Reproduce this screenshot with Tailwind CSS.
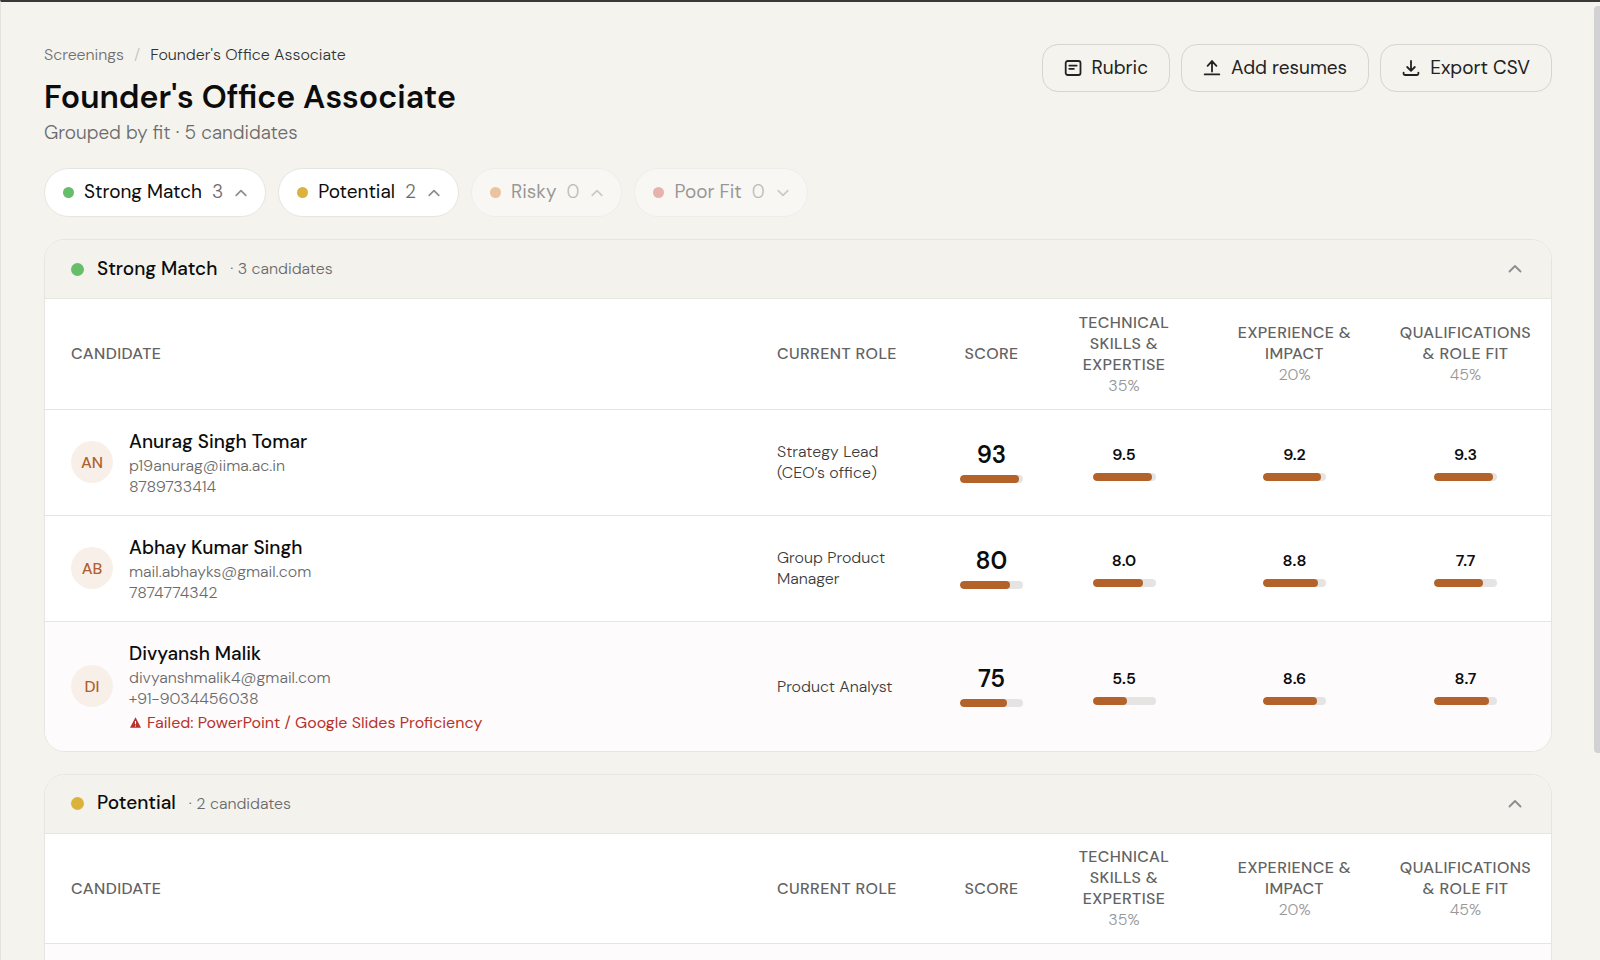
<!DOCTYPE html>
<html lang="en">

<head>
    <meta charset="UTF-8">
    <meta name="viewport" content="width=device-width, initial-scale=1.0">
    <title>Founder's Office Associate</title>
    <script src="https://cdn.jsdelivr.net/npm/@tailwindcss/browser@4"></script>
</head>

<body class="font-['DM_Sans','Inter',sans-serif] bg-[#f4f3ee] text-[#0c0c0c]">

    <div class="relative h-screen overflow-hidden border-t-2 border-l border-t-[#3b3738] border-l-[#e4e3df]">

        <main class="pl-[43px] pr-12 pt-[42px]">

            <!-- page header -->
            <header class="flex justify-between items-start">
                <div>
                    <nav class="flex items-center gap-2.5 text-base leading-[21px] font-light" aria-label="Breadcrumb">
                        <a class="text-[#6f6f6f]" href="#">Screenings</a>
                        <span class="text-[#c4c4c0]">/</span>
                        <span class="text-[#333333]">Founder's Office Associate</span>
                    </nav>
                    <h1 class="text-[32px] leading-[42px] font-semibold mt-[11px]">Founder's Office Associate</h1>
                    <p class="text-[19px] leading-6 font-light text-[#6b6b6b] mt-[3px]">Grouped by fit · 5 candidates</p>
                </div>
                <div class="flex gap-[11px] text-[19px] text-[#222222]">
                    <button class="flex items-center gap-2.5 h-12 px-[21px] rounded-2xl border border-[#d5d5d1]">
                        <svg class="w-[18px] h-[18px]" viewBox="0 0 18 18" fill="none" stroke="currentColor" stroke-width="1.8" stroke-linecap="round" stroke-linejoin="round"><rect x="1.7" y="2" width="14.8" height="14" rx="2" /><path d="M5.3 6.6h7.4M5.3 9.8h4.6" /></svg>
                        Rubric
                    </button>
                    <button class="flex items-center gap-2.5 h-12 px-[21px] rounded-2xl border border-[#d5d5d1]">
                        <svg class="w-[18px] h-[18px]" viewBox="0 0 18 18" fill="none" stroke="currentColor" stroke-width="1.8" stroke-linecap="round" stroke-linejoin="round"><path d="M9 12.6V2M4.6 6.9 9 2.2l4.4 4.7M1.7 15.4h14.6" /></svg>
                        Add resumes
                    </button>
                    <button class="flex items-center gap-2.5 h-12 px-[21px] rounded-2xl border border-[#d5d5d1]">
                        <svg class="w-[18px] h-[18px]" viewBox="0 0 18 18" fill="none" stroke="currentColor" stroke-width="1.8" stroke-linecap="round" stroke-linejoin="round"><path d="M9 1.9v9.7M5.2 8 9 11.8 12.8 8M1.6 13.6v1a1.4 1.4 0 0 0 1.4 1.4h12a1.4 1.4 0 0 0 1.4-1.4v-1" /></svg>
                        Export CSV
                    </button>
                </div>
            </header>

            <!-- fit filters -->
            <div class="flex gap-3 mt-[23px] text-[19px]">
                <button class="flex items-center gap-2.5 h-[49px] pl-[18px] pr-4 rounded-full border border-[#e6e6e1] bg-white">
                    <span class="w-[11px] h-[11px] rounded-full bg-[#66bd6a]"></span>
                    Strong Match
                    <span class="font-light text-[#6b6b6b]">3</span>
                    <svg class="w-4 h-4" viewBox="0 0 16 16" fill="none" stroke="#8d8d8d" stroke-width="1.7" stroke-linecap="round" stroke-linejoin="round"><path d="M3.2 10.4 8 5.6l4.8 4.8" /></svg>
                </button>
                <button class="flex items-center gap-2.5 h-[49px] pl-[18px] pr-4 rounded-full border border-[#e6e6e1] bg-white">
                    <span class="w-[11px] h-[11px] rounded-full bg-[#dab23c]"></span>
                    Potential
                    <span class="font-light text-[#6b6b6b]">2</span>
                    <svg class="w-4 h-4" viewBox="0 0 16 16" fill="none" stroke="#8d8d8d" stroke-width="1.7" stroke-linecap="round" stroke-linejoin="round"><path d="M3.2 10.4 8 5.6l4.8 4.8" /></svg>
                </button>
                <button class="flex items-center gap-2.5 h-[49px] pl-[18px] pr-4 rounded-full border border-[#e6e6e1] bg-white opacity-40">
                    <span class="w-[11px] h-[11px] rounded-full bg-[#dd7f2e]"></span>
                    Risky
                    <span class="font-light text-[#6b6b6b]">0</span>
                    <svg class="w-4 h-4" viewBox="0 0 16 16" fill="none" stroke="#8d8d8d" stroke-width="1.7" stroke-linecap="round" stroke-linejoin="round"><path d="M3.2 10.4 8 5.6l4.8 4.8" /></svg>
                </button>
                <button class="flex items-center gap-2.5 h-[49px] pl-[18px] pr-4 rounded-full border border-[#e6e6e1] bg-white opacity-40">
                    <span class="w-[11px] h-[11px] rounded-full bg-[#d2544b]"></span>
                    Poor Fit
                    <span class="font-light text-[#6b6b6b]">0</span>
                    <svg class="w-4 h-4" viewBox="0 0 16 16" fill="none" stroke="#8d8d8d" stroke-width="1.7" stroke-linecap="round" stroke-linejoin="round"><path d="M3.2 5.6 8 10.4l4.8-4.8" /></svg>
                </button>
            </div>

            <!-- strong match -->
            <section class="mt-[22px] rounded-[21px] border border-[#e6e6e1] bg-white overflow-hidden">
                <button class="flex items-center w-full h-[59px] pl-[26px] pr-7 border-b border-[#e6e6e1] bg-[#f3f2ed]">
                    <span class="w-[13px] h-[13px] rounded-full bg-[#66bd6a]"></span>
                    <span class="ml-[13px] text-[19px] font-medium">Strong Match</span>
                    <span class="ml-[13px] text-base font-light text-[#6b6b6b]">· 3 candidates</span>
                    <svg class="w-4 h-4 ml-auto" viewBox="0 0 16 16" fill="none" stroke="#8d8d8d" stroke-width="1.8" stroke-linecap="round" stroke-linejoin="round"><path d="m2.5 10.5 5.5-5.5 5.5 5.5" /></svg>
                </button>
                <table class="w-full table-fixed text-base leading-[21px]">
                    <colgroup>
                        <col>
                        <col class="w-[184px]">
                        <col class="w-[95px]">
                        <col class="w-[170px]">
                        <col class="w-[171px]">
                        <col class="w-[171px]">
                    </colgroup>
                    <thead>
                        <tr class="h-[110px] border-b border-[#e6e6e1] uppercase text-[#636363]">
                            <th class="pl-[26px] text-left font-medium tracking-wide">Candidate</th>
                            <th class="pl-[17px] text-left font-medium tracking-wide">Current role</th>
                            <th class="font-medium tracking-wide">Score</th>
                            <th class="px-6 font-medium tracking-wide">Technical skills &amp; expertise<span class="block font-light tracking-normal text-[#979797]">35%</span></th>
                            <th class="px-6 font-medium tracking-wide">Experience &amp; impact<span class="block font-light tracking-normal text-[#979797]">20%</span></th>
                            <th class="px-4 font-medium tracking-wide">Qualifications &amp; role fit<span class="block font-light tracking-normal text-[#979797]">45%</span></th>
                        </tr>
                    </thead>
                    <tbody id="strong"></tbody>
                </table>
            </section>

            <!-- potential -->
            <section class="mt-[22px] rounded-[21px] border border-[#e6e6e1] bg-white overflow-hidden">
                <button class="flex items-center w-full h-[59px] pl-[26px] pr-7 border-b border-[#e6e6e1] bg-[#f3f2ed]">
                    <span class="w-[13px] h-[13px] rounded-full bg-[#dab23c]"></span>
                    <span class="ml-[13px] text-[19px] font-medium">Potential</span>
                    <span class="ml-[13px] text-base font-light text-[#6b6b6b]">· 2 candidates</span>
                    <svg class="w-4 h-4 ml-auto" viewBox="0 0 16 16" fill="none" stroke="#8d8d8d" stroke-width="1.8" stroke-linecap="round" stroke-linejoin="round"><path d="m2.5 10.5 5.5-5.5 5.5 5.5" /></svg>
                </button>
                <table class="w-full table-fixed text-base leading-[21px]">
                    <colgroup>
                        <col>
                        <col class="w-[184px]">
                        <col class="w-[95px]">
                        <col class="w-[170px]">
                        <col class="w-[171px]">
                        <col class="w-[171px]">
                    </colgroup>
                    <thead>
                        <tr class="h-[110px] border-b border-[#e6e6e1] uppercase text-[#636363]">
                            <th class="pl-[26px] text-left font-medium tracking-wide">Candidate</th>
                            <th class="pl-[17px] text-left font-medium tracking-wide">Current role</th>
                            <th class="font-medium tracking-wide">Score</th>
                            <th class="px-6 font-medium tracking-wide">Technical skills &amp; expertise<span class="block font-light tracking-normal text-[#979797]">35%</span></th>
                            <th class="px-6 font-medium tracking-wide">Experience &amp; impact<span class="block font-light tracking-normal text-[#979797]">20%</span></th>
                            <th class="px-4 font-medium tracking-wide">Qualifications &amp; role fit<span class="block font-light tracking-normal text-[#979797]">45%</span></th>
                        </tr>
                    </thead>
                    <tbody>
                        <tr class="h-[130px] bg-[#fdfbfc]">
                            <td colspan="6"></td>
                        </tr>
                    </tbody>
                </table>
            </section>

        </main>

        <!-- scrollbar thumb -->
        <div class="absolute right-0 top-1 w-1.5 h-[78%] rounded-l bg-[#d2d2d2]"></div>
    </div>

    <script>
        var candidates = [
            { initials: "AN", name: "Anurag Singh Tomar", email: "p19anurag@iima.ac.in", phone: "8789733414", role: "Strategy Lead (CEO’s office)", score: 93, parts: [9.5, 9.2, 9.3] },
            { initials: "AB", name: "Abhay Kumar Singh", email: "mail.abhayks@gmail.com", phone: "7874774342", role: "Group Product Manager", score: 80, parts: [8.0, 8.8, 7.7] },
            { initials: "DI", name: "Divyansh Malik", email: "divyanshmalik4@gmail.com", phone: "+91-9034456038", role: "Product Analyst", score: 75, parts: [5.5, 8.6, 8.7], failed: "PowerPoint / Google Slides Proficiency" }
        ];

        function bar(percent) {
            return '<div class="w-[63px] h-2 mx-auto rounded-full bg-[#e5e4e2] overflow-hidden">' +
                '<div class="h-full rounded-full bg-[#b36229]" style="width: ' + percent + '%"></div></div>';
        }

        function row(c) {
            var failed = "";
            if (c.failed) {
                failed = '<p class="flex items-center gap-[5px] mt-[3px] font-normal text-[#b8322c]">' +
                    '<svg class="w-[13px] h-[13px]" viewBox="0 0 13 13"><path d="M6.5 1.2 12 11.8H1z" fill="#b8322c" /><path d="M6.5 5v3.2M6.5 9.4v1.2" stroke="#fff" stroke-width="1.1" /></svg>' +
                    'Failed: ' + c.failed + '</p>';
            }
            var html = '<tr class="border-b border-[#e6e6e1] last:border-b-0 ' + (c.failed ? 'bg-[#fdfbfc]' : 'bg-white') + '">' +
                '<td class="pl-[26px] py-[18px]"><div class="flex items-center gap-4">' +
                '<span class="flex items-center justify-center w-[42px] h-[42px] rounded-full bg-[#f8f0e8] font-medium text-[#b0602f]">' + c.initials + '</span>' +
                '<div class="font-light text-[#6b6b6b]"><p class="text-[19px] leading-[27px] font-medium text-[#0c0c0c]">' + c.name + '</p>' +
                '<p>' + c.email + '</p><p>' + c.phone + '</p>' + failed + '</div></div></td>' +
                '<td class="pl-[17px] pr-6 font-light text-[#3c3c3c]">' + c.role + '</td>' +
                '<td class="text-center"><p class="text-2xl leading-7 font-semibold mb-1.5">' + c.score + '</p>' + bar(c.score) + '</td>';
            c.parts.forEach(function (p) {
                html += '<td class="text-center"><p class="font-semibold mb-2">' + p.toFixed(1) + '</p>' + bar(p * 10) + '</td>';
            });
            return html + '</tr>';
        }

        document.getElementById("strong").innerHTML = candidates.map(row).join("");
    </script>

</body>

</html>
